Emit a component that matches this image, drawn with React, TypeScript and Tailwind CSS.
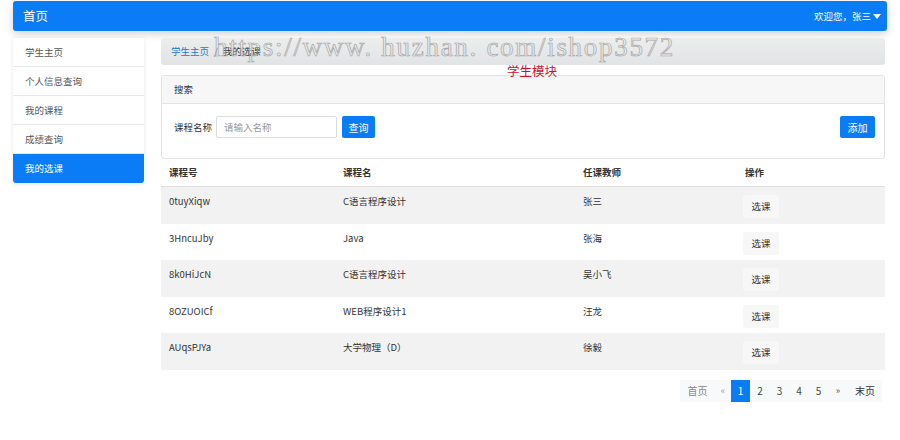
import React from 'react';

const rows = [
  { id: '0tuyXiqw', name: 'C语言程序设计', teacher: '张三' },
  { id: '3HncuJby', name: 'Java', teacher: '张海' },
  { id: '8k0HiJcN', name: 'C语言程序设计', teacher: '吴小飞' },
  { id: '8OZUOICf', name: 'WEB程序设计1', teacher: '汪龙' },
  { id: 'AUqsPJYa', name: '大学物理（D）', teacher: '徐毅' },
];

const menu = ['学生主页', '个人信息查询', '我的课程', '成绩查询', '我的选课'];

export default function App() {
  return (
    <div className="relative w-[900px] h-[440px] bg-white px-[13px] pt-[1px] overflow-hidden font-['Noto_Sans_CJK_SC','Noto_Sans',sans-serif]">
      {/* Top bar */}
      <div className="h-[30px] bg-[#0a7cf6] rounded-[3px] shadow-[0_3px_8px_rgba(0,0,0,0.18)] flex items-center justify-between pl-[10px] pr-[6px] text-white">
        <span className="text-[12.5px] leading-none">首页</span>
        <span className="flex items-center gap-[2px] text-[9.5px]">
          欢迎您，张三
          <svg width="8" height="5" viewBox="0 0 8 5">
            <path d="M0 0h8L4 5z" fill="#fff" />
          </svg>
        </span>
      </div>

      <div className="flex gap-[17px] mt-[7px]">
        {/* Sidebar */}
        <div className="w-[131px] shrink-0 self-start rounded-[3px] shadow-[0_1px_4px_rgba(0,0,0,0.1)] text-[9.5px]">
          {menu.map((m, i) =>
            i === menu.length - 1 ? (
              <div key={m} className="h-[29px] flex items-center pl-[12px] bg-[#0a7cf6] text-white rounded-b-[3px]">
                {m}
              </div>
            ) : (
              <div key={m} className="h-[29px] flex items-center pl-[12px] text-[#555] border-b border-[#e8e8e8] bg-white">
                {m}
              </div>
            )
          )}
        </div>

        {/* Main */}
        <div className="flex-1 mr-[2px]">
          <div className="h-[27px] rounded-[3px] bg-[linear-gradient(#eceded,#e2e3e5)] flex items-center px-[10px] text-[9.5px]">
            <span className="text-[#1f78d1]">学生主页</span>
            <span className="text-[#777] mx-[5px]">/</span>
            <span className="text-[#333]">我的选课</span>
          </div>

          <div className="mt-[10px] border border-[#e3e3e3] rounded-[3px]">
            <div className="h-[28px] bg-[#f7f7f7] border-b border-[#e3e3e3] flex items-center pl-[12px] text-[9.5px] text-[#333]">
              搜索
            </div>
            <div className="flex items-start pl-[12px] pr-[9px] pt-[12px] pb-[20px] text-[9.5px]">
              <span className="h-[22px] flex items-center text-[#333]">课程名称</span>
              <div className="ml-[4px] w-[121px] h-[22px] border border-[#ddd] rounded-[2px] flex items-center pl-[7px] text-[#999]">
                请输入名称
              </div>
              <button className="ml-[5px] w-[33px] h-[22px] bg-[#0a7cf6] text-white rounded-[2px] text-[10px]">查询</button>
              <button className="ml-auto w-[35px] h-[22px] bg-[#0a7cf6] text-white rounded-[2px] text-[10px]">添加</button>
            </div>
          </div>

          <div className="text-[9.5px] text-[#333]">
            <div className="flex h-[28px] items-center font-bold border-b border-[#e0e0e0]">
              <div className="w-[174px] pl-[8px]">课程号</div>
              <div className="w-[240px] pl-[8px]">课程名</div>
              <div className="w-[160px] pl-[8px]">任课教师</div>
              <div className="flex-1 pl-[10px]">操作</div>
            </div>
            {rows.map((r, i) => (
              <div key={r.id} className={`flex h-[36.5px] ${i % 2 === 0 ? 'bg-[#f2f2f2]' : 'bg-white'}`}>
                <div className="w-[174px] pl-[8px] pt-[7px]">{r.id}</div>
                <div className="w-[240px] pl-[8px] pt-[7px]">{r.name}</div>
                <div className="w-[160px] pl-[8px] pt-[7px]">{r.teacher}</div>
                <div className="flex-1 pl-[8px] pt-[8px]">
                  <div className="w-[36px] h-[23px] rounded-[2px] bg-[#f7f7f7] flex items-center justify-center">选课</div>
                </div>
              </div>
            ))}
          </div>

          <div className="flex justify-end mt-[10px] pr-[3px]">
            <div className="flex h-[22px] items-center bg-[#f8f9fa] text-[10px]">
              <span className="w-[35px] text-center text-[#888]">首页</span>
              <span className="w-[16px] text-center text-[#999] text-[9px]">«</span>
              <span className="w-[19px] h-[22px] flex items-center justify-center bg-[#0a7cf6] text-white">1</span>
              <span className="w-[20px] text-center text-[#444]">2</span>
              <span className="w-[19px] text-center text-[#444]">3</span>
              <span className="w-[20px] text-center text-[#444]">4</span>
              <span className="w-[19px] text-center text-[#444]">5</span>
              <span className="w-[20px] text-center text-[#555] text-[9px]">»</span>
              <span className="w-[34px] text-center text-[#333]">末页</span>
            </div>
          </div>
        </div>
      </div>

      {/* Watermark overlay */}
      <div className="absolute left-[214px] top-[27px] text-[27px] tracking-[1.7px] text-transparent [-webkit-text-stroke:0.7px_#a8a8a8] font-['Liberation_Serif',serif] whitespace-nowrap pointer-events-none">
        https://www. huzhan. com/ishop3572
      </div>
      <div className="absolute left-[507px] top-[62px] text-[12.5px] text-[#c8102e] pointer-events-none">学生模块</div>
    </div>
  );
}
